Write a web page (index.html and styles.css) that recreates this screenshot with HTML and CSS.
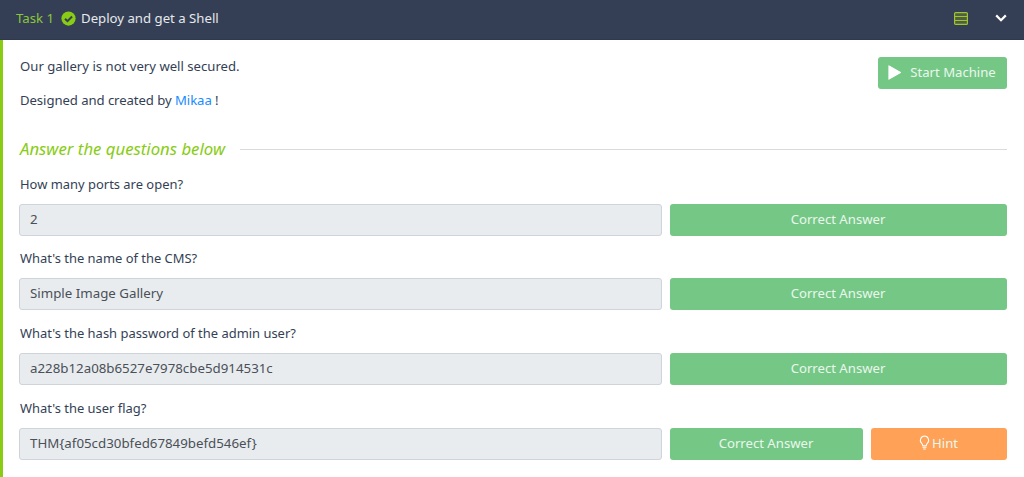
FILE: index.html
```html
<!DOCTYPE html>
<html lang="en">
<head>
<meta charset="utf-8">
<title>Task 1</title>
<link rel="stylesheet" href="styles.css">
</head>
<body>
<header class="task-header">
  <span class="task-num">Task 1</span>
  <svg class="check" viewBox="0 0 16 16" width="15" height="15"><circle cx="8" cy="8" r="7.6" fill="#88cc14"/><path d="M4.3 8.3l2.6 2.6 4.9-5" fill="none" stroke="#343f55" stroke-width="2.1"/></svg>
  <span class="task-title">Deploy and get a Shell</span>
  <svg class="server" viewBox="0 0 14 13" width="14" height="13"><rect x="1" y="1" width="12" height="11" fill="#4f6040"/><rect x=".6" y=".6" width="12.8" height="11.8" rx="1" fill="none" stroke="#9fc42f" stroke-width="1.2"/><path d="M.5 4.5h13M.5 8.5h13" stroke="#9fc42f"/></svg>
  <svg class="chevron" viewBox="0 0 12 8" width="12" height="8"><path d="M1.2 1.4L6 6.2l4.8-4.8" fill="none" stroke="#fff" stroke-width="2.2"/></svg>
</header>
<main class="task-body">
  <div class="intro">
    <div class="intro-text">
      <p>Our gallery is not very well secured.</p>
      <p class="credit">Designed and created by <a href="#">Mikaa</a> !</p>
    </div>
    <button class="btn btn-start"><svg viewBox="0 0 12 14" width="13" height="15"><path d="M.8.8v12.4L11.6 7z" fill="#fff" stroke="#fff" stroke-linejoin="round"/></svg><span>Start Machine</span></button>
  </div>
  <div class="answer-head"><span>Answer the questions below</span><i class="rule"></i></div>
  <section class="q">
    <label>How many ports are open?</label>
    <div class="row"><div class="field">2</div><button class="btn btn-ok">Correct Answer</button></div>
  </section>
  <section class="q">
    <label>What's the name of the CMS?</label>
    <div class="row"><div class="field">Simple Image Gallery</div><button class="btn btn-ok">Correct Answer</button></div>
  </section>
  <section class="q">
    <label>What's the hash password of the admin user?</label>
    <div class="row"><div class="field">a228b12a08b6527e7978cbe5d914531c</div><button class="btn btn-ok">Correct Answer</button></div>
  </section>
  <section class="q">
    <label>What's the user flag?</label>
    <div class="row"><div class="field">THM{af05cd30bfed67849befd546ef}</div><button class="btn btn-ok btn-short">Correct Answer</button><button class="btn btn-hint"><svg viewBox="0 0 12 16" width="11" height="15"><path d="M6 1a4.6 4.6 0 0 0-3 8c.8.8 1 1.6 1.1 2.6h3.8c.1-1 .3-1.8 1.1-2.6A4.6 4.6 0 0 0 6 1zM4.3 13.2h3.4M5 15h2" fill="none" stroke="#fff" stroke-width="1.1" stroke-linecap="round"/></svg>Hint</button></div>
  </section>
</main>
</body>
</html>
```
FILE: styles.css
```css
* { box-sizing: border-box; }
html, body { margin: 0; padding: 0; height: 477px; overflow: hidden; background: #fff; }
body { font-family: "Noto Sans", "Open Sans", sans-serif; font-size: 13.15px; color: #343f55; }
.task-header { height: 40px; background: #343f55; display: flex; align-items: center; padding: 0 16px 3px; font-size: 13.2px; border-bottom: 1px solid #2f394d; }
.task-num { color: #8cc63a; }
.check { margin-left: 7px; }
.task-title { color: #e6e8ec; margin-left: 5px; flex: 1; }
.server { margin-right: 27px; }
.chevron { margin-right: 1px; }
.task-body { border-left: 3px solid #88cc14; height: 437px; padding: 17px 17px 0 17px; }
.intro { display: flex; justify-content: space-between; align-items: flex-start; }
.intro-text p { margin: 0 0 16px; line-height: 18px; }
.intro-text .credit { letter-spacing: -0.07px; }
.intro-text a { color: #1a8cff; text-decoration: none; }
.btn { border: 0; border-radius: 3px; background: #75c786; color: #e9f7ec; font: inherit; height: 32px; padding: 0 1px 2px 0; display: flex; align-items: center; justify-content: center; }
.btn-start { width: 129px; gap: 9px; }
.answer-head { display: flex; align-items: center; gap: 15px; margin-top: 14px; color: #88cc14; font-style: italic; font-size: 16.75px; line-height: 20px; }
.rule { flex: 1; height: 1px; background: #d8dadd; }
.q { margin-top: 12px; height: 62.67px; }
.q label { display: block; line-height: 16px; margin-bottom: 12px; font-size: 12.95px; }
.answer-head + .q { margin-top: 16.6px; }
.row { display: flex; gap: 8px; }
.field { flex: 1; height: 32px; background: #e9ecef; border: 1px solid #ced4da; border-radius: 3px; padding: 0 10px; line-height: 28px; color: #495057; margin-left: -1px; font-size: 13.3px; }
.btn-ok { width: 337px; }
.btn-short { width: 193px; }
.btn-hint { width: 136px; background: #ffa257; gap: 2px; }
```
